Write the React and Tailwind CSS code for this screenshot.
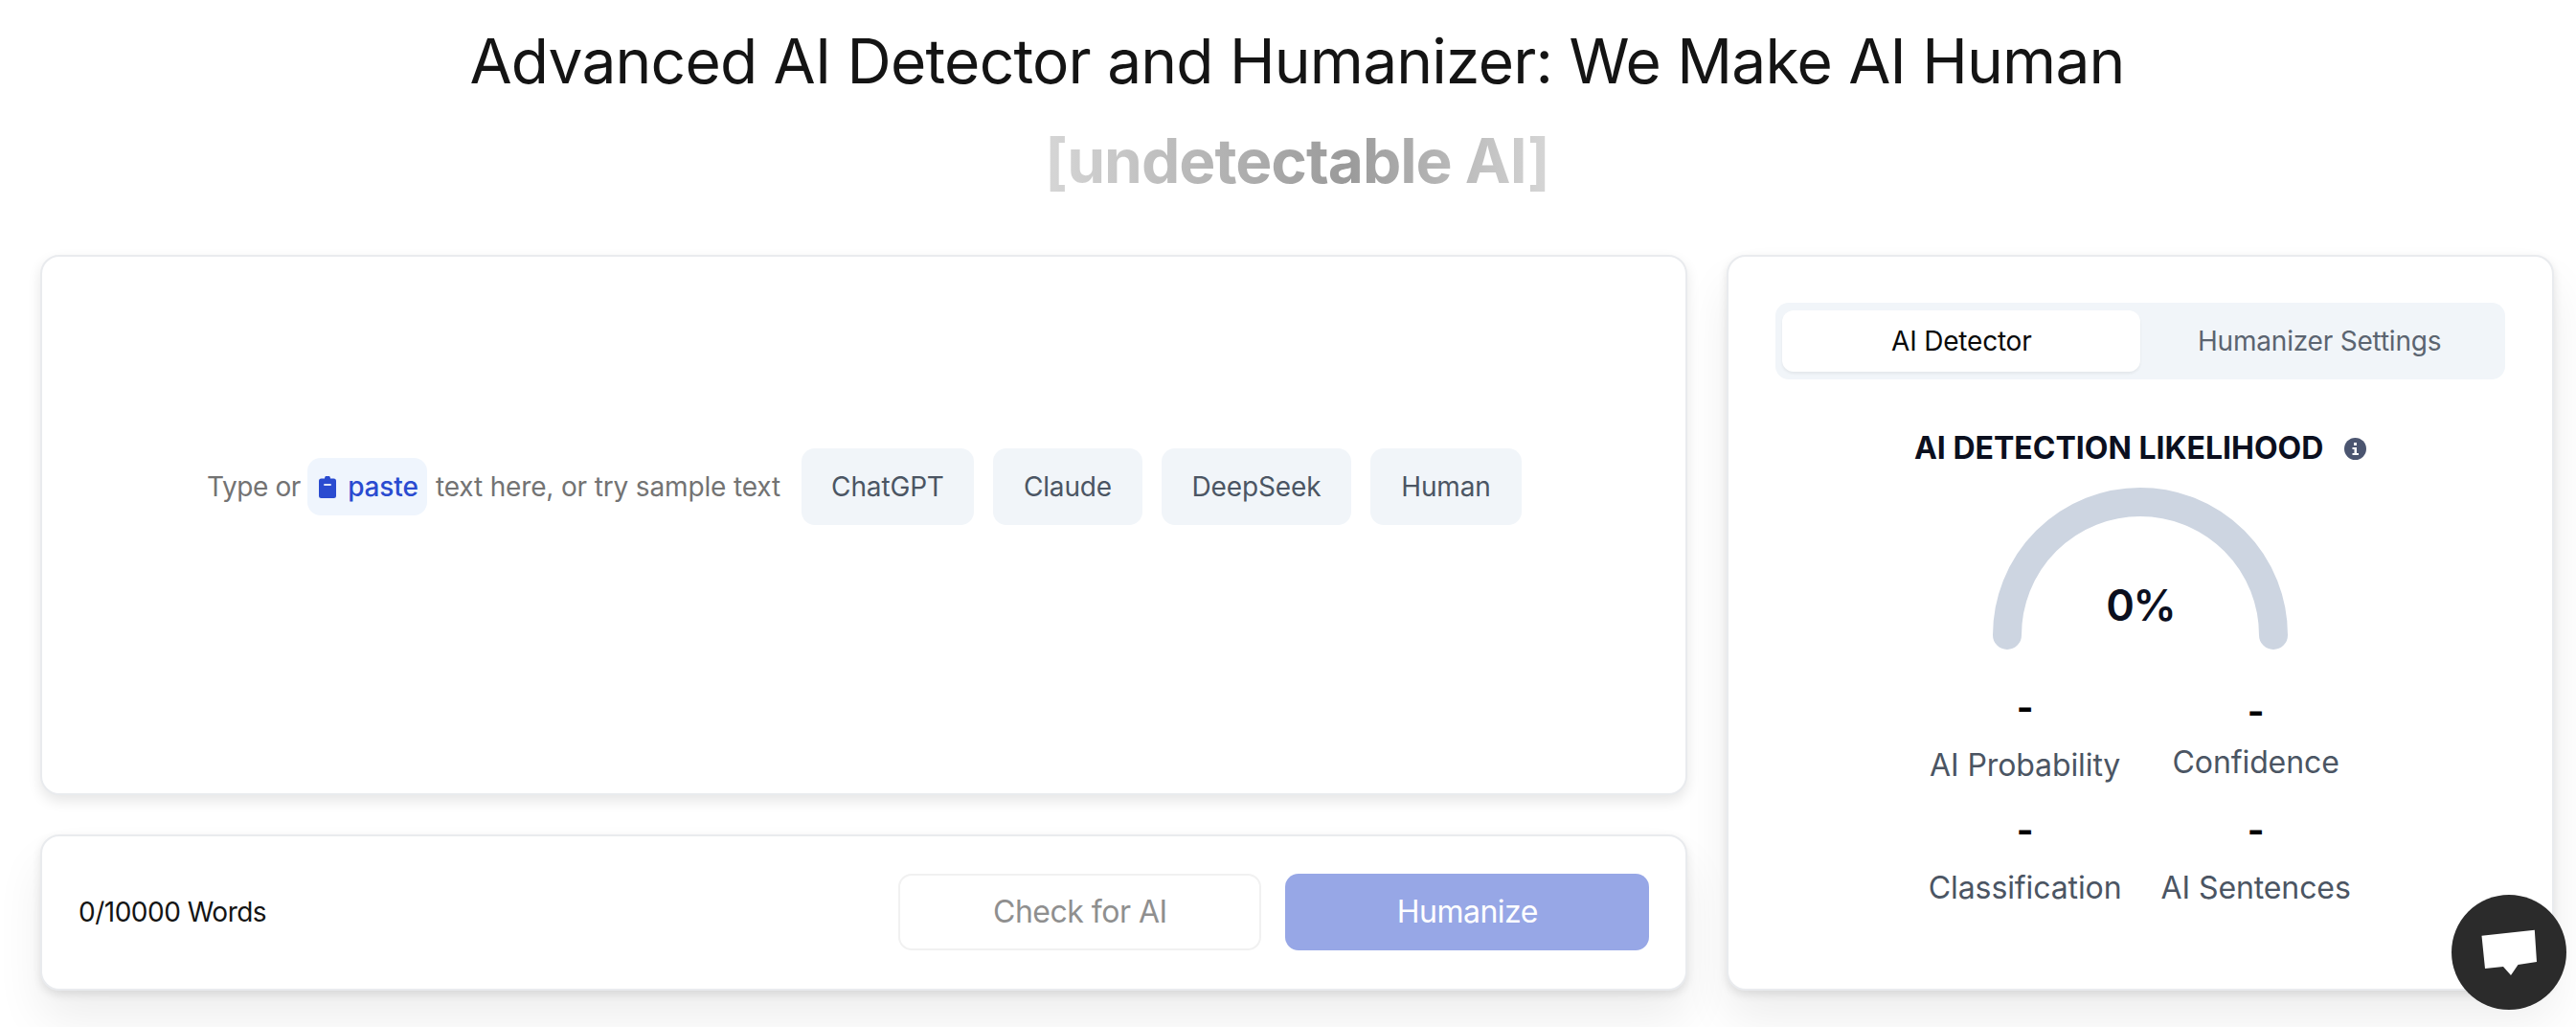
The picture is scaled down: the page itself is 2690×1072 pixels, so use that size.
import React from 'react';

const samples = [
  { name: 'ChatGPT', w: 'w-[180px]' },
  { name: 'Claude', w: 'w-[156px]' },
  { name: 'DeepSeek', w: 'w-[198px]' },
  { name: 'Human', w: 'w-[158px]' },
];

const ClipboardIcon = () => (
  <svg width="18" height="23" viewBox="0 0 18 23" className="shrink-0">
    <path d="M6 2.5a3 3 0 0 1 6 0h3.5A2.5 2.5 0 0 1 18 5v15.5a2.5 2.5 0 0 1-2.5 2.5h-13A2.5 2.5 0 0 1 0 20.500V5a2.500 2.500 0 0 1 2.500-2.500z" fill="#2a4bd0" />
    <rect x="5" y="8" width="8" height="2" rx="1" fill="#dfe6fa" />
  </svg>
);

const InfoIcon = () => (
  <svg width="23" height="23" viewBox="0 0 23 23" className="shrink-0">
    <circle cx="11.500" cy="11.500" r="11.500" fill="#4b5570" />
    <rect x="10" y="5" width="3" height="3" fill="#fff" />
    <path d="M8.500 10h4.500v6h2v2H8.500v-2h2v-4h-2z" fill="#fff" />
  </svg>
);

const Stat = ({ label, className, gap }) => (
  <div className={`flex flex-col items-center ${className}`}>
    <span className="text-[38px] leading-[30px] font-bold text-black">-</span>
    <span className={`text-[32px] leading-[36px] tracking-[-0.1px] text-[#4b5563] ${gap}`}>{label}</span>
  </div>
);

export default function App() {
  return (
    <div className="relative h-[1072px] overflow-hidden bg-white pl-[42px] pr-[23px] font-[Inter,sans-serif]">
      <h1 className="pt-[24px] text-center text-[64px] leading-[80px] font-normal tracking-[-0.77px] text-[#141414]">
        Advanced AI Detector and Humanizer: We Make AI Human
      </h1>
      <div className="mt-[24px] flex justify-center">
        <span className="bg-linear-to-r from-[#d6d6d6] via-[#9a9a9a] via-60% to-[#d6d6d6] bg-clip-text text-[64px] leading-[80px] font-bold tracking-[-1px] text-transparent">
          [undetectable AI]
        </span>
      </div>

      <div className="mt-[58px] flex gap-[41px]">
        <div className="flex w-[1721px] flex-col gap-[41px]">
          <div className="flex h-[564px] items-start rounded-[20px] border-2 border-[#e9ebee] bg-white pt-[200px] pl-[172px] shadow-[0_6px_14px_rgba(0,0,0,0.1)]">
            <div className="flex items-center text-[28px] tracking-[-0.15px] text-[#737373]">
              <span className="tracking-[-0.4px]">Type or</span>
              <span className="mr-[9px] ml-[7px] flex h-[60px] w-[125px] items-center justify-center gap-[12px] rounded-[14px] bg-[#eff5fd] pl-[3px] font-medium text-[#2a4bd0]">
                <ClipboardIcon />
                paste
              </span>
              <span>text here, or try sample text</span>
              <div className="ml-[22px] flex gap-[20px]">
                {samples.map((s) => (
                  <div key={s.name} className={`flex h-[80px] items-center justify-center rounded-[14px] bg-[#f1f5f9] text-[28px] text-[#4b5563] ${s.w}`}>
                    {s.name}
                  </div>
                ))}
              </div>
            </div>
          </div>

          <div className="flex h-[163px] items-center justify-between rounded-[20px] border-2 border-[#e9ebee] bg-white pr-[38px] pb-[2px] pl-[38px] shadow-[0_4px_10px_rgba(0,0,0,0.1),0_30px_50px_rgba(0,0,0,0.07)]">
            <span className="text-[28px] tracking-[-0.5px] text-[#141414]">0/10000 Words</span>
            <div className="flex gap-[25px]">
              <button className="h-[80px] w-[379px] rounded-[14px] border-2 border-[#f1f1f1] bg-white text-[32px] tracking-[-0.5px] text-[#8f8f8f]">
                Check for AI
              </button>
              <button className="h-[80px] w-[380px] rounded-[14px] bg-[#97a7e6] text-[32px] tracking-[-0.5px] text-white">
                Humanize
              </button>
            </div>
          </div>
        </div>

        <div className="flex h-[768px] w-[864px] flex-col items-center rounded-[20px] border-2 border-[#e9ebee] bg-white px-[49px] pt-[48px] shadow-[0_4px_10px_rgba(0,0,0,0.1),0_30px_50px_rgba(0,0,0,0.07)]">
          <div className="flex h-[80px] w-full items-center rounded-[14px] bg-[#f1f5f9] px-[7px] text-[28px] tracking-[-0.2px]">
            <div className="flex h-[64px] w-[374px] items-center justify-center rounded-[12px] bg-white text-[#0a0a0a] shadow-[0_2px_3px_rgba(0,0,0,0.06)]">
              AI Detector
            </div>
            <div className="flex flex-1 items-center justify-center text-[#5b6470]">Humanizer Settings</div>
          </div>

          <div className="mt-[52px] flex items-center gap-[22px]">
            <span className="text-[32px] leading-[40px] font-bold text-[#0b0f1e]">AI DETECTION LIKELIHOOD</span>
            <InfoIcon />
          </div>

          <div className="relative mt-[21px]">
            <svg width="308" height="169" viewBox="0 0 308 169" className="block">
              <path d="M15 154A139 139 0 0 1 293 154" fill="none" stroke="#cdd5e1" strokeWidth="30" strokeLinecap="round" />
            </svg>
            <span className="absolute top-[96px] left-0 w-full text-center text-[45px] leading-[54px] font-semibold tracking-[-1.5px] text-[#0b0f1e]">0%</span>
          </div>

          <div className="mt-[45px] grid w-[482px] grid-cols-2">
            <Stat label="AI Probability" gap="mt-[28px]" />
            <Stat label="Confidence" className="mt-[4px]" gap="mt-[21px]" />
            <Stat label="Classification" className="mt-[34px]" gap="mt-[28px]" />
            <Stat label="AI Sentences" className="mt-[34px]" gap="mt-[28px]" />
          </div>
        </div>
      </div>

      <button className="absolute top-[934px] left-[2560px] flex size-[120px] items-center justify-center rounded-full bg-[#2b2b2b]">
        <svg width="58" height="48" viewBox="0 0 58 48">
          <path d="M0.500 6.700 55.800 0.700 58 34 38.500 37 31 48 23 39 4 41z" fill="#fff" />
        </svg>
      </button>
    </div>
  );
}
